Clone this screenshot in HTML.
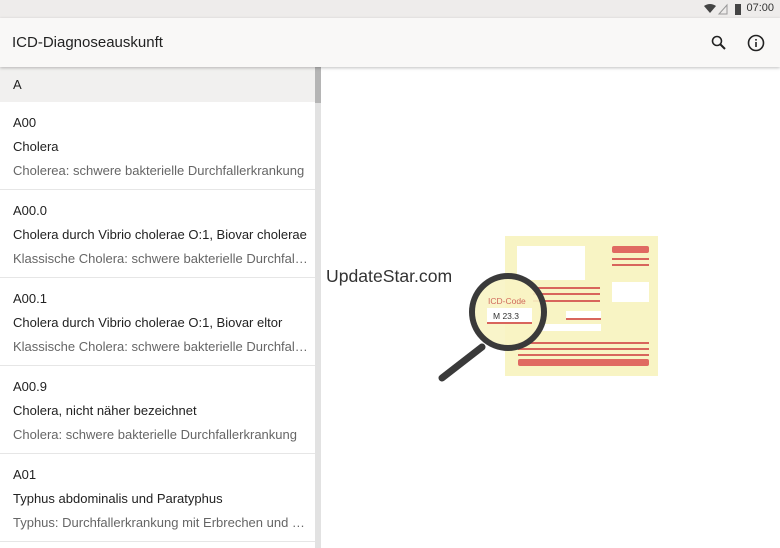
<!DOCTYPE html>
<html><head><meta charset="utf-8"><style>
*{margin:0;padding:0;box-sizing:border-box}
body{width:780px;height:548px;overflow:hidden;background:#fff;font-family:"Liberation Sans","DejaVu Sans",sans-serif;position:relative}
.status{position:absolute;top:0;left:0;width:780px;height:18px;background:#eeeceb}
.status .t{position:absolute;right:6px;top:2px;font-size:11px;color:#333}
.bar{position:absolute;top:18px;left:0;width:780px;height:49px;background:#f9f8f7;box-shadow:0 1px 3px rgba(0,0,0,.25);z-index:2}
.bar h1{position:absolute;left:12px;top:16px;font-size:15px;font-weight:normal;color:#222}
.list{position:absolute;top:67px;left:0;width:321px;height:481px;border-right:1px solid #ddd}
.sec{height:35px;background:#f1f0ef;font-size:13px;color:#222;padding:10px 13px}
.item{height:88px;border-bottom:1px solid #e6e6e6;padding:0 13px;font-size:13px;white-space:nowrap;overflow:hidden}
.item .c{padding-top:13px;color:#222}
.item .n{margin-top:9px;color:#222}
.item .d{margin-top:9px;color:#666;overflow:hidden;text-overflow:ellipsis;width:296px}
.sb{position:absolute;left:315px;top:67px;width:6px;height:481px;background:#e2e2e2}
.sb i{position:absolute;left:0;top:0;width:6px;height:36px;background:#b5b5b5}
.wm{position:absolute;left:326px;top:266px;font-size:17.6px;color:#333}
</style></head><body>
<div class="status"><svg style="position:absolute;left:703px;top:3px" width="40" height="12"><path d="M1 3 Q7 -1 13 3 L7 10Z" fill="#444"/><path d="M16 11 L24 2 L24 11Z" fill="none" stroke="#999"/><rect x="32" y="1" width="6" height="11" fill="#444"/></svg><span class="t">07:00</span></div>
<div class="bar"><h1>ICD-Diagnoseauskunft</h1>
<svg style="position:absolute;left:710px;top:16px" width="18" height="18"><circle cx="7" cy="7" r="4.5" fill="none" stroke="#222" stroke-width="1.6"/><path d="M10.5 10.5 L15 15" stroke="#222" stroke-width="2"/></svg>
<svg style="position:absolute;left:746px;top:15px" width="20" height="20"><circle cx="10" cy="10" r="7.5" fill="none" stroke="#222" stroke-width="1.6"/><rect x="9.2" y="9" width="1.6" height="5" fill="#222"/><rect x="9.2" y="6" width="1.6" height="1.6" fill="#222"/></svg>
</div>
<div class="list">
<div class="sec">A</div>
<div class="item"><div class="c">A00</div><div class="n">Cholera</div><div class="d">Cholerea: schwere bakterielle Durchfallerkrankung</div></div>
<div class="item"><div class="c">A00.0</div><div class="n">Cholera durch Vibrio cholerae O:1, Biovar cholerae</div><div class="d">Klassische Cholera: schwere bakterielle Durchfallerkrankung</div></div>
<div class="item"><div class="c">A00.1</div><div class="n">Cholera durch Vibrio cholerae O:1, Biovar eltor</div><div class="d">Klassische Cholera: schwere bakterielle Durchfallerkrankung</div></div>
<div class="item"><div class="c">A00.9</div><div class="n">Cholera, nicht näher bezeichnet</div><div class="d">Cholera: schwere bakterielle Durchfallerkrankung</div></div>
<div class="item"><div class="c">A01</div><div class="n">Typhus abdominalis und Paratyphus</div><div class="d">Typhus: Durchfallerkrankung mit Erbrechen und Fieber</div></div>
</div>
<div class="sb"><i></i></div>
<svg style="position:absolute;left:0;top:0" width="780" height="548">
<rect x="505" y="236" width="153" height="140" fill="#f8f4c4"/>
<rect x="517" y="246" width="68" height="34" fill="#fff"/>
<rect x="612" y="246" width="37" height="7" rx="2" fill="#e06a62"/>
<rect x="612" y="258" width="37" height="2" fill="#d8655c"/>
<rect x="612" y="264" width="37" height="2" fill="#d8655c"/>
<rect x="612" y="282" width="37" height="20" fill="#fff"/>
<rect x="533" y="287" width="67" height="2" fill="#d8655c"/>
<rect x="533" y="293" width="67" height="2" fill="#d8655c"/>
<rect x="533" y="300" width="67" height="2" fill="#d8655c"/>
<rect x="566" y="311" width="35" height="8" fill="#fff"/>
<rect x="566" y="318" width="35" height="2" fill="#d8655c"/>
<rect x="535" y="324" width="66" height="7" fill="#fff"/>
<rect x="518" y="342" width="131" height="2" fill="#d8655c"/>
<rect x="518" y="348" width="131" height="2" fill="#d8655c"/>
<rect x="518" y="354" width="131" height="2" fill="#d8655c"/>
<rect x="518" y="359" width="131" height="7" rx="2" fill="#e06a62"/>
<circle cx="508" cy="312" r="36" fill="#f8f4c4" fill-opacity="0.9"/>
<rect x="487" y="308" width="45" height="14" fill="#fff"/>
<rect x="487" y="322" width="45" height="2" fill="#d8655c"/>
<text x="488" y="304" font-size="8.5" fill="#d06a5c" font-family="Liberation Sans,sans-serif">ICD-Code</text>
<text x="493" y="319" font-size="8.5" fill="#333" font-family="Liberation Sans,sans-serif">M 23.3</text>
<circle cx="508" cy="312" r="36" fill="none" stroke="#3a3a3a" stroke-width="6"/>
<path d="M482 347 L442 378" stroke="#3a3a3a" stroke-width="7" stroke-linecap="round"/>
</svg>
<div class="wm">UpdateStar.com</div>
</body></html>
